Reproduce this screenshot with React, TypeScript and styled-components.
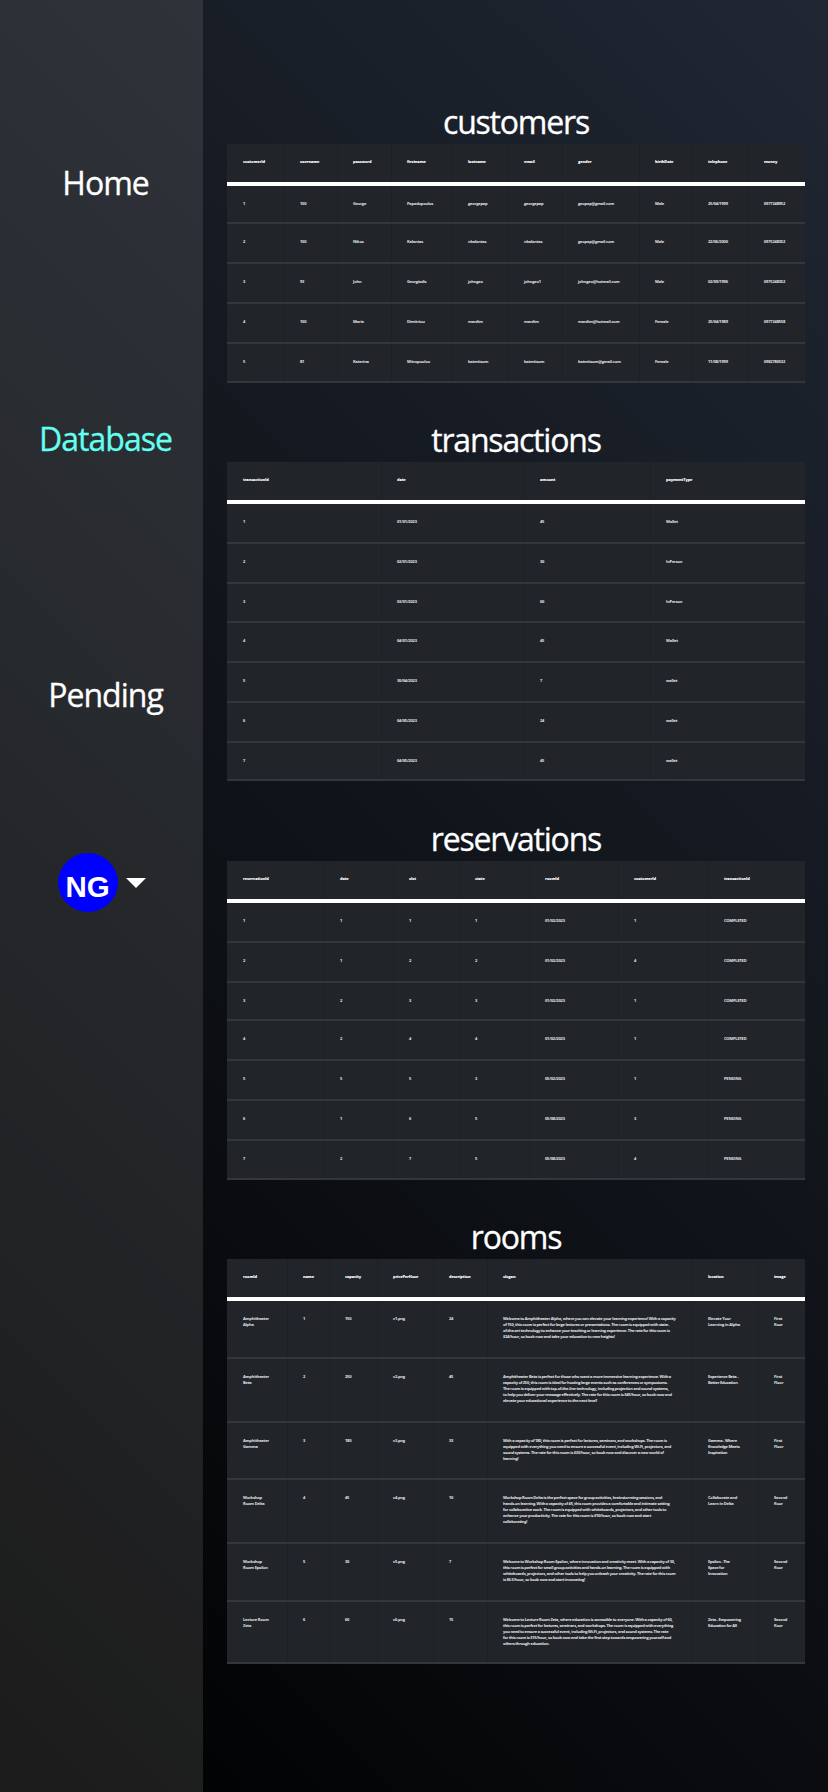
import React from 'react';
import styled, { createGlobalStyle } from 'styled-components';

const GlobalStyle = createGlobalStyle`
  * { box-sizing: border-box; }
  body { margin: 0; background: #000; font-family: "Open Sans", "Noto Sans", sans-serif; color: #fff; }
`;

const Page = styled.div`
  display: flex;
  width: 828px;
  height: 1792px;
  overflow: hidden;
  background: linear-gradient(45deg, #000000, #202733);
`;

const Sidebar = styled.nav`
  width: 203px;
  flex: none;
  display: flex;
  flex-direction: column;
  align-items: center;
  padding-top: 159px;
  background: rgba(128, 128, 128, 0.22);
`;

const NavLink = styled.a<{ $active?: boolean }>`
  height: 48px;
  line-height: 48px;
  margin: 0 0 208px 8px;
  font-size: 32px;
  letter-spacing: -1px;
  -webkit-text-stroke: 0.3px currentColor;
  color: ${(p) => (p.$active ? '#64fff0' : '#fff')};
  text-decoration: none;
`;

const Profile = styled.div`
  display: flex;
  align-items: center;
  gap: 8px;
  margin-top: -74px;
`;

const Avatar = styled.div`
  width: 60px;
  height: 59px;
  border-radius: 50%;
  background: #0000ff;
  font: bold 29.5px/67px "Liberation Sans", Arial, sans-serif;
  text-align: center;
`;

const Caret = styled.span`
  border: 10px solid transparent;
  border-top-color: #fff;
  border-bottom: 0;
`;

const Content = styled.main`
  flex: 1;
  padding: 96px 23px 0 24px;
`;

const Section = styled.section<{ $height: number }>`
  height: ${(p) => p.$height}px;
`;

const Title = styled.h2`
  margin: 0;
  height: 48px;
  font-size: 32px;
  line-height: 52px;
  font-weight: 400;
  text-align: center;
  letter-spacing: -1.2px;
  -webkit-text-stroke: 0.3px currentColor;
`;

const Table = styled.div`
  background: #212529;
  font-size: 4px;
  line-height: 6px;
`;

const Row = styled.div<{ $cols: string; $height: number; $head?: boolean }>`
  display: grid;
  grid-template-columns: ${(p) => p.$cols};
  height: ${(p) => p.$height}px;
  border-bottom: ${(p) => (p.$head ? '4px solid #fff' : '2px solid #33373b')};
  font-weight: ${(p) => (p.$head ? 800 : 700)};
  color: ${(p) => (p.$head ? '#fff' : '#e4e5e7')};
`;

const Cell = styled.div<{ $long: boolean }>`
  padding: 15px 0 0 16px;
  white-space: pre;
  letter-spacing: ${(p) => (p.$long ? -0.25 : -0.18)}px;
  & + & { border-left: 1px solid #1d2125; padding-left: 15px; }
`;

interface TableData {
  name: string;
  height: number;
  cols: number[];
  rowHeights: number[];
  rows: string[][];
}

const tables: TableData[] = [
  {
    name: 'customers', height: 318,
    cols: [57, 53, 54, 61, 56, 54, 77, 53, 56, 57],
    rowHeights: [42, 38, 40, 40, 40, 39],
    rows: [
      ['customerId', 'username', 'password', 'firstname', 'lastname', 'email', 'gender', 'birthDate', 'telephone', 'money'],
      ['1', '100', 'George', 'Papadopoulos', 'georgepap', 'georgepap', 'geopap@gmail.com', 'Male', '25/04/1999', '6977248952'],
      ['2', '100', 'Nikos', 'Kalantas', 'nkalantas', 'nkalantas', 'geopap@gmail.com', 'Male', '22/06/2000', '6975248352'],
      ['3', '93', 'John', 'Georgiadis', 'johngeo', 'johngeo1', 'johngeo@hotmail.com', 'Male', '02/09/1996', '6975248352'],
      ['4', '100', 'Maria', 'Dimitriou', 'mardim', 'mardim', 'mardim@hotmail.com', 'Female', '25/04/1989', '6977248558'],
      ['5', '81', 'Katerina', 'Mitropoulou', 'katmitsom', 'katmitsom', 'katmitsom@gmail.com', 'Female', '11/08/1999', '6982786532'],
    ],
  },
  {
    name: 'transactions', height: 399,
    cols: [154, 143, 126, 155],
    rowHeights: [42, 40, 40, 39, 40, 40, 40, 38],
    rows: [
      ['transactionId', 'date', 'amount', 'paymentType'],
      ['1', '01/01/2023', '45', 'Wallet'],
      ['2', '02/01/2023', '30', 'InPerson'],
      ['3', '03/01/2023', '60', 'InPerson'],
      ['4', '04/01/2023', '45', 'Wallet'],
      ['5', '30/04/2023', '7', 'wallet'],
      ['6', '04/05/2023', '24', 'wallet'],
      ['7', '04/05/2023', '45', 'wallet'],
    ],
  },
  {
    name: 'reservations', height: 398,
    cols: [97, 69, 66, 70, 89, 90, 97],
    rowHeights: [42, 40, 40, 38, 40, 40, 40, 39],
    rows: [
      ['reservationId', 'date', 'slot', 'state', 'roomId', 'customerId', 'transactionId'],
      ['1', '1', '1', '1', '01/02/2023', '1', 'COMPLETED'],
      ['2', '1', '2', '2', '01/02/2023', '4', 'COMPLETED'],
      ['3', '2', '3', '3', '01/02/2023', '1', 'COMPLETED'],
      ['4', '2', '4', '4', '01/02/2023', '1', 'COMPLETED'],
      ['5', '5', '5', '3', '05/02/2023', '1', 'PENDING'],
      ['6', '1', '6', '5', '05/08/2023', '3', 'PENDING'],
      ['7', '2', '7', '5', '05/08/2023', '4', 'PENDING'],
    ],
  },
  {
    name: 'rooms', height: 480,
    cols: [60, 42, 48, 56, 54, 205, 66, 47],
    rowHeights: [42, 58, 64, 57, 64, 58, 62],
    rows: [
      ['roomId', 'name', 'capacity', 'pricePerHour', 'description', 'slogan', 'location', 'image'],
      ['Amphitheater\nAlpha', '1', '150', 'c1.png', '24', 'Welcome to Amphitheater Alpha, where you can elevate your learning experience! With a capacity\nof 150, this room is perfect for large lectures or presentations. The room is equipped with state-\nof-the-art technology to enhance your teaching or learning experience. The rate for this room is\n$24/hour, so book now and take your education to new heights!', 'Elevate Your\nLearning in Alpha', 'First\nfloor'],
      ['Amphitheater\nBeta', '2', '250', 'c2.png', '45', 'Amphitheater Beta is perfect for those who want a more immersive learning experience. With a\ncapacity of 250, this room is ideal for hosting large events such as conferences or symposiums.\nThe room is equipped with top-of-the-line technology, including projection and sound systems,\nto help you deliver your message effectively. The rate for this room is $45/hour, so book now and\nelevate your educational experience to the next level!', 'Experience Beta -\nBetter Education', 'First\nFloor'],
      ['Amphitheater\nGamma', '3', '180', 'c3.png', '33', 'With a capacity of 180, this room is perfect for lectures, seminars, and workshops. The room is\nequipped with everything you need to ensure a successful event, including Wi-Fi, projectors, and\nsound systems. The rate for this room is $33/hour, so book now and discover a new world of\nlearning!', 'Gamma - Where\nKnowledge Meets\nInspiration', 'First\nFloor'],
      ['Workshop\nRoom Delta', '4', '45', 'c4.png', '10', 'Workshop Room Delta is the perfect space for group activities, brainstorming sessions, and\nhands-on learning. With a capacity of 45, this room provides a comfortable and intimate setting\nfor collaborative work. The room is equipped with whiteboards, projectors, and other tools to\nenhance your productivity. The rate for this room is $10/hour, so book now and start\ncollaborating!', 'Collaborate and\nLearn in Delta', 'Second\nfloor'],
      ['Workshop\nRoom Epsilon', '5', '30', 'c5.png', '7', 'Welcome to Workshop Room Epsilon, where innovation and creativity meet. With a capacity of 30,\nthis room is perfect for small group activities and hands-on learning. The room is equipped with\nwhiteboards, projectors, and other tools to help you unleash your creativity. The rate for this room\nis $6.5/hour, so book now and start innovating!', 'Epsilon - The\nSpace for\nInnovation', 'Second\nfloor'],
      ['Lecture Room\nZeta', '6', '60', 'c6.png', '15', 'Welcome to Lecture Room Zeta, where education is accessible to everyone. With a capacity of 60,\nthis room is perfect for lectures, seminars, and workshops. The room is equipped with everything\nyou need to ensure a successful event, including Wi-Fi, projectors, and sound systems. The rate\nfor this room is $15/hour, so book now and take the first step towards empowering yourself and\nothers through education.', 'Zeta - Empowering\nEducation for All', 'Second\nfloor'],
    ],
  },
];

export default function App() {
  return (
    <>
      <GlobalStyle />
      <Page>
        <Sidebar>
          <NavLink href="#">Home</NavLink>
          <NavLink href="#" $active>Database</NavLink>
          <NavLink href="#">Pending</NavLink>
          <Profile>
            <Avatar>NG</Avatar>
            <Caret />
          </Profile>
        </Sidebar>
        <Content>
          {tables.map((t) => (
            <Section key={t.name} $height={t.height}>
              <Title>{t.name}</Title>
              <Table>
                {t.rows.map((row, r) => (
                  <Row key={r} $head={r === 0} $height={t.rowHeights[r]} $cols={t.cols.map((c) => `${c}px`).join(' ')}>
                    {row.map((text, c) => (
                      <Cell key={c} $long={text.length > 30}>{text}</Cell>
                    ))}
                  </Row>
                ))}
              </Table>
            </Section>
          ))}
        </Content>
      </Page>
    </>
  );
}
